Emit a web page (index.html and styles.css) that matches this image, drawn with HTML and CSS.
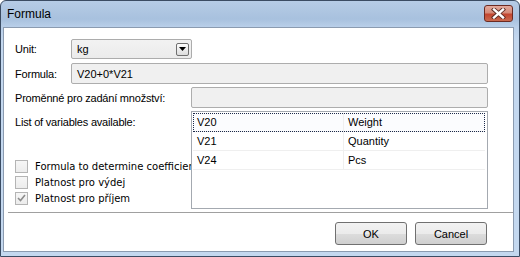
FILE: index.html
```html
<!DOCTYPE html>
<html lang="cs">
<head>
    <meta charset="UTF-8">
    <meta name="viewport" content="width=device-width, initial-scale=1.0">
    <title>Formula</title>
    <link rel="stylesheet" href="styles.css">
</head>
<body>
    <div class="window">
        <div class="titlebar">
            <span class="title">Formula</span>
            <button class="close-btn" title="Close">
                <svg width="17" height="11" viewBox="0 0 17 11">
                    <path d="M4 1.5 L13 9.5 M13 1.5 L4 9.5" stroke="#5a2a22" stroke-width="4.2" stroke-linecap="square" fill="none"/>
                    <path d="M4 1.5 L13 9.5 M13 1.5 L4 9.5" stroke="#ffffff" stroke-width="2.4" stroke-linecap="square" fill="none"/>
                </svg>
            </button>
        </div>

        <div class="client">
            <div class="content">
                <div class="row row-unit">
                    <label class="lbl lbl-short">Unit:</label>
                    <div class="combo">
                        <span class="combo-value">kg</span>
                        <span class="combo-btn">
                            <svg width="7" height="4" viewBox="0 0 7 4"><path d="M0 0 H7 L3.5 4 Z" fill="#000"/></svg>
                        </span>
                    </div>
                </div>

                <div class="row row-formula">
                    <label class="lbl lbl-short">Formula:</label>
                    <div class="field">V20+0*V21</div>
                </div>

                <div class="row row-qty">
                    <label class="lbl lbl-long">Proměnné pro zadání množství:</label>
                    <div class="field"></div>
                </div>

                <div class="row row-list">
                    <div class="list-side">
                        <label class="lbl">List of variables available:</label>
                        <div class="checks">
                            <div class="check">
                                <span class="box"></span>
                                <span class="check-text">Formula to determine coefficient</span>
                            </div>
                            <div class="check">
                                <span class="box"></span>
                                <span class="check-text">Platnost pro výdej</span>
                            </div>
                            <div class="check">
                                <span class="box checked">
                                    <svg width="9" height="8" viewBox="0 0 9 8"><path d="M1 4 L3.5 6.5 L8 1" stroke="#8c8c8c" stroke-width="1.6" fill="none"/></svg>
                                </span>
                                <span class="check-text">Platnost pro příjem</span>
                            </div>
                        </div>
                    </div>

                    <div class="listbox">
                        <div class="list-row focused">
                            <span class="cell cell-code">V20</span>
                            <span class="cell">Weight</span>
                        </div>
                        <div class="list-row">
                            <span class="cell cell-code">V21</span>
                            <span class="cell">Quantity</span>
                        </div>
                        <div class="list-row">
                            <span class="cell cell-code">V24</span>
                            <span class="cell">Pcs</span>
                        </div>
                    </div>
                </div>
            </div>

            <div class="footer">
                <button class="btn">OK</button>
                <button class="btn">Cancel</button>
            </div>
        </div>
    </div>
</body>
</html>
```

FILE: styles.css
```css
* {
    box-sizing: border-box;
}
body {
    margin: 0;
    background-color: #ffffff;
    font-family: "Liberation Sans", Arial, sans-serif;
    font-size: 11px;
    color: #000;
}
.window {
    width: 520px;
    height: 257px;
    border: 1px solid #3b4c63;
    border-radius: 6px 6px 0 0;
    padding: 0 5px 4px 2px;
    background: linear-gradient(#b6cce6, #a8c1de 18px, #b9cfe9 26px, #c4d8ef 40px, #c4d8ef);
    display: flex;
    flex-direction: column;
}
.titlebar {
    height: 26px;
    display: flex;
    align-items: flex-start;
    justify-content: space-between;
    padding-left: 4px;
}
.title {
    font-size: 12px;
    color: #000;
    margin-top: 6px;
}
.close-btn {
    width: 29px;
    height: 17px;
    margin-top: 4px;
    margin-right: 1px;
    padding: 0;
    border: 1px solid #6b2a22;
    border-radius: 3px;
    background: linear-gradient(#e3a99c, #d58a78 45%, #c3452f 55%, #c96a4f);
    display: flex;
    align-items: center;
    justify-content: center;
}
.client {
    flex: 1;
    background-color: #fff;
    border: 1px solid #8b9bb0;
    display: flex;
    flex-direction: column;
}
.content {
    padding: 11px 25px 0 11px;
}
.row {
    display: flex;
    align-items: center;
}
.row-formula {
    margin-top: 4px;
}
.row-qty, .row-list {
    margin-top: 3px;
}
.lbl {
    white-space: nowrap;
    letter-spacing: -0.2px;
}
.lbl-short {
    width: 56px;
    flex: none;
}
.lbl-long {
    width: 176px;
    flex: none;
}
.combo {
    width: 121px;
    height: 20px;
    border: 1px solid #acacac;
    border-radius: 2px;
    background: linear-gradient(#f2f2f2, #ebebeb);
    display: flex;
    align-items: center;
    justify-content: space-between;
    padding: 0 2px 0 5px;
}
.combo-btn {
    width: 13px;
    height: 13px;
    border: 1px solid #6f6f6f;
    border-radius: 2px;
    background: linear-gradient(#fdfdfd, #dcdcdc);
    display: flex;
    align-items: center;
    justify-content: center;
}
.field {
    flex: 1;
    height: 21px;
    border: 1px solid #adadad;
    border-radius: 2px;
    background-color: #f0f0f0;
    padding: 0 5px;
    display: flex;
    align-items: center;
}
.row-list {
    align-items: stretch;
}
.list-side {
    width: 176px;
    flex: none;
    overflow: hidden;
    display: flex;
    flex-direction: column;
    padding-top: 5px;
}
.checks {
    margin-top: auto;
    padding-bottom: 3px;
    font-family: "DejaVu Sans", Verdana, sans-serif;
    font-size: 10px;
}
.check {
    display: flex;
    align-items: center;
    height: 16px;
    white-space: nowrap;
}
.box {
    width: 13px;
    height: 13px;
    flex: none;
    border: 1px solid #b4b4b4;
    background: linear-gradient(#f6f6f6, #ececec);
    margin-right: 7px;
    display: flex;
    align-items: center;
    justify-content: center;
}
.listbox {
    flex: 1;
    height: 98px;
    border: 1px solid #a4a9b0;
    padding: 1px 2px 1px 1px;
}
.list-row {
    height: 19px;
    display: flex;
    border-bottom: 1px solid #efefef;
}
.list-row.focused {
    outline: 1px dotted #1c2a4a;
    outline-offset: -1px;
    background-color: #fbfcfe;
}
.cell {
    display: flex;
    align-items: center;
    padding-left: 4px;
}
.cell-code {
    width: 151px;
    border-right: 1px solid #efefef;
}
.footer {
    margin: 3px 0 0 4px;
    border-top: 1px solid #a0a0a0;
    padding: 9px 26px 0 0;
    display: flex;
    justify-content: flex-end;
    gap: 8px;
}
.btn {
    width: 72px;
    height: 23px;
    border: 1px solid #707070;
    border-radius: 3px;
    background: linear-gradient(#f2f2f2, #ebebeb 50%, #dddddd 50%, #cfcfcf);
    font-family: "Liberation Sans", Arial, sans-serif;
    font-size: 11px;
    color: #000;
    padding: 0;
}
```
